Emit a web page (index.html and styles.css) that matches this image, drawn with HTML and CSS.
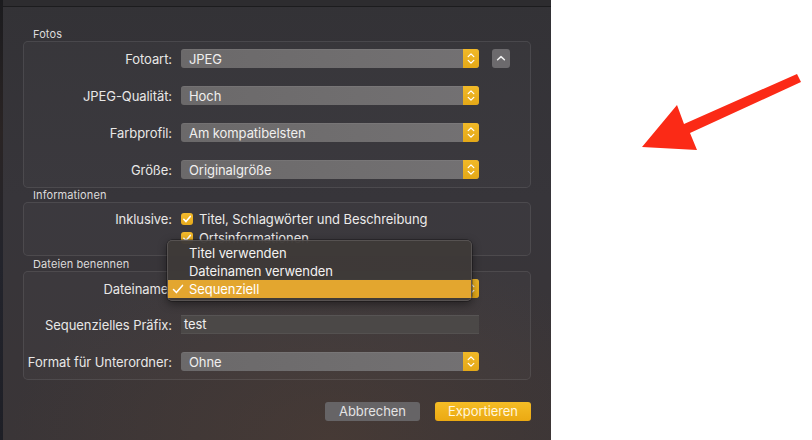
FILE: index.html
```html
<!DOCTYPE html>
<html lang="de">
<head>
<meta charset="utf-8">
<link rel="stylesheet" href="styles.css">
</head>
<body>
<div class="screen">
  <div class="panel">
    <div class="strip"></div>
    <div class="main">
      <div class="topbar"></div>
      <div class="content">
        <div class="sect-label">Fotos</div>
        <div class="box box-fotos">
          <div class="row">
            <div class="lbl">Fotoart:</div>
            <div class="popup"><span class="ptext">JPEG</span><span class="stepper"><svg width="16" height="19" viewBox="0 0 16 19"><path d="M5.2 7.6 L8 4.9 L10.8 7.6 M5.2 11.4 L8 14.1 L10.8 11.4" fill="none" stroke="#fff" stroke-width="1.3" stroke-linecap="round" stroke-linejoin="round"/></svg></span></div>
            <div class="sqbtn"><svg width="18" height="19" viewBox="0 0 18 19"><path d="M5.6 10.8 L9 7.6 L12.4 10.8" fill="none" stroke="#f2f2f2" stroke-width="1.5" stroke-linecap="round" stroke-linejoin="round"/></svg></div>
          </div>
          <div class="row">
            <div class="lbl">JPEG-Qualität:</div>
            <div class="popup"><span class="ptext">Hoch</span><span class="stepper"><svg width="16" height="19" viewBox="0 0 16 19"><path d="M5.2 7.6 L8 4.9 L10.8 7.6 M5.2 11.4 L8 14.1 L10.8 11.4" fill="none" stroke="#fff" stroke-width="1.3" stroke-linecap="round" stroke-linejoin="round"/></svg></span></div>
          </div>
          <div class="row">
            <div class="lbl">Farbprofil:</div>
            <div class="popup"><span class="ptext">Am kompatibelsten</span><span class="stepper"><svg width="16" height="19" viewBox="0 0 16 19"><path d="M5.2 7.6 L8 4.9 L10.8 7.6 M5.2 11.4 L8 14.1 L10.8 11.4" fill="none" stroke="#fff" stroke-width="1.3" stroke-linecap="round" stroke-linejoin="round"/></svg></span></div>
          </div>
          <div class="row">
            <div class="lbl">Größe:</div>
            <div class="popup"><span class="ptext">Originalgröße</span><span class="stepper"><svg width="16" height="19" viewBox="0 0 16 19"><path d="M5.2 7.6 L8 4.9 L10.8 7.6 M5.2 11.4 L8 14.1 L10.8 11.4" fill="none" stroke="#fff" stroke-width="1.3" stroke-linecap="round" stroke-linejoin="round"/></svg></span></div>
          </div>
        </div>

        <div class="sect-label">Informationen</div>
        <div class="box box-info">
          <div class="row">
            <div class="lbl">Inklusive:</div>
            <div class="check"><span class="cb"><svg width="12" height="12" viewBox="0 0 12 12"><path d="M2.8 6.3 L5 8.6 L9.3 3.4" fill="none" stroke="#fff" stroke-width="1.6" stroke-linecap="round" stroke-linejoin="round"/></svg></span><span>Titel, Schlagwörter und Beschreibung</span></div>
          </div>
          <div class="row">
            <div class="lbl"></div>
            <div class="check"><span class="cb"><svg width="12" height="12" viewBox="0 0 12 12"><path d="M2.8 6.3 L5 8.6 L9.3 3.4" fill="none" stroke="#fff" stroke-width="1.6" stroke-linecap="round" stroke-linejoin="round"/></svg></span><span>Ortsinformationen</span></div>
          </div>
        </div>

        <div class="sect-label">Dateien benennen</div>
        <div class="box box-files">
          <div class="row">
            <div class="lbl">Dateiname:</div>
            <div class="popup-wrap">
              <div class="popup"><span class="ptext">Sequenziell</span><span class="stepper"><svg width="16" height="19" viewBox="0 0 16 19"><path d="M5.2 7.6 L8 4.9 L10.8 7.6 M5.2 11.4 L8 14.1 L10.8 11.4" fill="none" stroke="#fff" stroke-width="1.3" stroke-linecap="round" stroke-linejoin="round"/></svg></span></div>
              <div class="menu">
                <div class="mitem"><span class="mcheck"></span>Titel verwenden</div>
                <div class="mitem"><span class="mcheck"></span>Dateinamen verwenden</div>
                <div class="mitem sel"><span class="mcheck"><svg width="12" height="18" viewBox="0 0 12 18"><path d="M1.5 9.6 L4.4 12.6 L10.5 5.4" fill="none" stroke="#fff" stroke-width="1.5" stroke-linecap="round" stroke-linejoin="round"/></svg></span>Sequenziell</div>
              </div>
            </div>
          </div>
          <div class="row">
            <div class="lbl">Sequenzielles Präfix:</div>
            <div class="field">test</div>
          </div>
          <div class="row">
            <div class="lbl">Format für Unterordner:</div>
            <div class="popup"><span class="ptext">Ohne</span><span class="stepper"><svg width="16" height="19" viewBox="0 0 16 19"><path d="M5.2 7.6 L8 4.9 L10.8 7.6 M5.2 11.4 L8 14.1 L10.8 11.4" fill="none" stroke="#fff" stroke-width="1.3" stroke-linecap="round" stroke-linejoin="round"/></svg></span></div>
          </div>
        </div>

        <div class="buttons">
          <div class="btn btn-cancel">Abbrechen</div>
          <div class="btn btn-export">Exportieren</div>
        </div>
      </div>
    </div>
  </div>
  <div class="canvas">
    <svg width="261" height="440" viewBox="551 0 261 440">
      <path d="M797 74 L801 82 L690 133 L697 150 L642 147 L677 105 L684 124 Z" fill="#fb2a16"/>
    </svg>
  </div>
</div>
</body>
</html>
```

FILE: styles.css
```css
* { box-sizing: border-box; }
html, body { margin: 0; padding: 0; }
body {
  width: 812px;
  height: 440px;
  overflow: hidden;
  background: #ffffff;
  font-family: "Inter", "Liberation Sans", sans-serif;
  font-size: 13px;
  letter-spacing: -0.07px;
  color: #e8e7e6;
}
.screen { display: flex; width: 812px; height: 440px; }
.panel {
  width: 551px;
  height: 440px;
  display: flex;
  background:
    radial-gradient(ellipse 320px 200px at 330px 440px, rgba(80,62,52,0.55), rgba(80,62,52,0) 100%),
    linear-gradient(180deg, #333236 0%, #37353a 45%, #3a3537 100%);
}
.strip {
  width: 3px;
  background: linear-gradient(180deg, #1b1b1e 0%, #2a2424 30%, #23242c 60%, #1e1f26 100%);
}
.main { flex: 1; display: flex; flex-direction: column; }
.topbar {
  height: 7px;
  background: #2d2c2f;
  border-bottom: 1px solid #1c1c1e;
}
.content {
  padding: 20px 20px 0 20px;
  display: flex;
  flex-direction: column;
}
.sect-label {
  height: 14px;
  line-height: 14px;
  font-size: 11px;
  padding-left: 10px;
  color: #dcdbdb;
  letter-spacing: 0.1px;
}
.box {
  border: 1px solid rgba(255,255,255,0.085);
  background: rgba(255,255,255,0.025);
  border-radius: 5px;
  display: flex;
  flex-direction: column;
}
.box-fotos { height: 147px; padding-top: 7px; gap: 18px; }
.box-info { height: 54px; padding-top: 6px; gap: 0; margin-bottom: 1px; }
.box-files { height: 109px; padding-top: 7px; gap: 17px; }
.box-files .row + .row + .row { margin-top: 1px; }
.row {
  height: 19px;
  display: flex;
  align-items: center;
}
.lbl {
  width: 148px;
  text-align: right;
  margin-right: 9px;
  white-space: nowrap;
}
.popup {
  width: 298px;
  height: 19px;
  border-radius: 3px;
  background: linear-gradient(90deg, #6b696a 0%, #706e6f 60%, #737173 100%);
  display: flex;
  align-items: center;
  justify-content: space-between;
  overflow: hidden;
  box-shadow: inset 0 1px 0 rgba(255,255,255,0.06);
}
.ptext { padding-left: 8px; color: #f0efee; }
.stepper {
  width: 16px;
  height: 19px;
  background: linear-gradient(180deg, #f1b928 0%, #e4a817 100%);
  display: flex;
}
.sqbtn {
  width: 18px;
  height: 19px;
  margin-left: 13px;
  border-radius: 3px;
  background: #6c6a6d;
  display: flex;
}
.check { display: flex; align-items: center; gap: 6px; color: #ecebea; }
.cb {
  width: 12px;
  height: 12px;
  border-radius: 3px;
  background: linear-gradient(180deg, #f2b92c 0%, #e6aa1c 100%);
  display: flex;
}
.popup-wrap { position: relative; width: 298px; height: 19px; }
.menu {
  position: absolute;
  left: -14px;
  top: -39px;
  width: 305px;
  height: 61px;
  padding-top: 3px;
  border-radius: 5px;
  background: rgba(62,58,56,0.97);
  border: 1px solid rgba(255,255,255,0.13);
  box-shadow: 0 3px 10px rgba(0,0,0,0.45), 0 0 0 0.5px rgba(0,0,0,0.5);
  z-index: 5;
}
.mitem {
  height: 18px;
  line-height: 18px;
  display: flex;
  align-items: center;
  color: #f3f2f1;
}
.mitem.sel { background: #e3a62f; color: #ffffff; }
.mcheck { width: 21px; height: 18px; padding-left: 4px; display: flex; }
.field {
  width: 298px;
  height: 19px;
  background: #4b4847;
  box-shadow: inset 0 1px 0 rgba(255,255,255,0.07), inset 0 -1px 0 rgba(255,255,255,0.05);
  padding-left: 3px;
  line-height: 19px;
  color: #f0efee;
}
.buttons {
  display: flex;
  justify-content: flex-end;
  gap: 15px;
  margin-top: 22px;
}
.btn {
  height: 19px;
  line-height: 19px;
  text-align: center;
  border-radius: 3px;
}
.btn-cancel { width: 95px; background: #666466; color: #e4e3e3; }
.btn-export {
  width: 96px;
  background: linear-gradient(180deg, #f5bd26 0%, #eba912 100%);
  color: #fff6de;
}
.canvas { flex: 1; height: 440px; display: flex; }
```
